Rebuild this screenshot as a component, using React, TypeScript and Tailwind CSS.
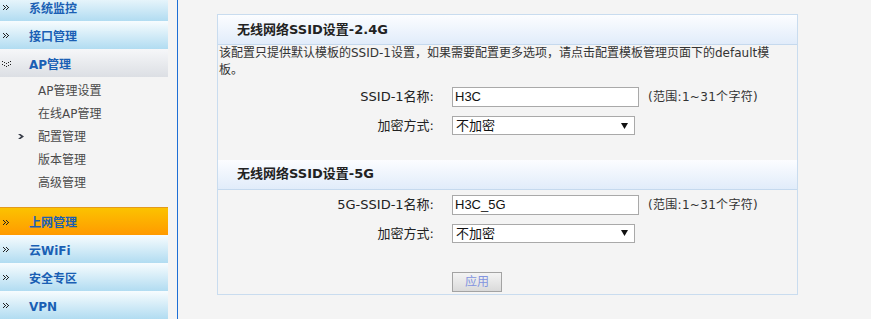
import React from 'react';

const FONT = { fontFamily: '"DejaVu Sans", "Noto Sans CJK SC", sans-serif' };

// dotted double-chevron used in front of every top-level menu item
const DotArrow: React.FC<{ down?: boolean }> = ({ down }) => {
  const right = [[1, 0], [4, 0], [2, 1], [5, 1], [3, 2], [6, 2], [2, 3], [5, 3], [1, 4], [4, 4]];
  const pts = down ? right.map(([x, y]) => [y * 2, x - 1]) : right;
  return (
    <svg width="10" height="7" viewBox="0 0 10 7" className="shrink-0">
      {pts.map(([x, y], i) => (
        <rect key={i} x={x} y={y} width="1" height="1" fill="#1f1f1f" />
      ))}
    </svg>
  );
};

const MenuItem: React.FC<{ label: string; tone: 'blue' | 'grey' | 'orange'; down?: boolean }> = ({ label, tone, down }) => {
  const bg =
    tone === 'orange'
      ? 'bg-gradient-to-b from-[#fbc200] to-[#ff9a00] border-t border-[#e39a1c]'
      : tone === 'grey'
        ? 'bg-gradient-to-b from-[#f6f7f9] to-[#dcdfe4]'
        : 'bg-gradient-to-b from-[#f7fcfe] to-[#b1dcf1]';
  return (
    <div className={`flex h-[28px] w-[168px] items-center gap-[17px] pl-[2px] pt-[3px] ${bg}`}>
      <DotArrow down={down} />
      <span className="text-[12px] font-bold text-[#1a5fb4]">{label}</span>
    </div>
  );
};

const SubItem: React.FC<{ label: string; active?: boolean }> = ({ label, active }) => (
  <div className="flex h-[23px] items-center">
    <div className="flex w-[38px] justify-end pr-[14px]">
      {active && (
        <svg width="6" height="5" viewBox="0 0 6 5">
          <path d="M0 0 H2.5 L6 2.5 L2.5 5 H0 L3 2.5 Z" fill="#3a3f4a" />
        </svg>
      )}
    </div>
    <span className="text-[12px] text-[#4a4a4a]">{label}</span>
  </div>
);

const Field: React.FC<{ label: string; value: string }> = ({ label, value }) => (
  <div className="flex items-center">
    <div className="w-[216px] text-right text-[13px] text-[#222]">{label}</div>
    <div
      className="ml-[18px] flex h-[20px] w-[187px] items-center border border-[#a9a9a9] bg-white px-[2px] text-[13px] text-[#111]"
      style={{ fontFamily: '"Liberation Sans", "Noto Sans CJK SC", sans-serif' }}
    >
      {value}
    </div>
    <span className="ml-[9px] text-[12px] tracking-[0.3px] text-[#333]">(范围:1~31个字符)</span>
  </div>
);

const Select: React.FC<{ label: string }> = ({ label }) => (
  <div className="flex items-center">
    <div className="w-[216px] text-right text-[13px] text-[#222]">{label}</div>
    <div
      className="ml-[18px] flex h-[19px] w-[183px] items-center justify-between border border-[#a9a9a9] bg-white pl-[3px] pr-[6px] text-[13px] text-[#111]"
      style={{ fontFamily: '"Liberation Sans", "Noto Sans CJK SC", sans-serif' }}
    >
      <span>不加密</span>
      <svg width="7" height="6" viewBox="0 0 7 6">
        <path d="M0 0 H7 L3.5 6 Z" fill="#111" />
      </svg>
    </div>
  </div>
);

const SectionHead: React.FC<{ title: string }> = ({ title }) => (
  <div className="flex h-[30px] items-center border-b border-[#c5d9ee] bg-gradient-to-b from-[#fcfdff] to-[#e1ecfa] pl-[19px] text-[13px] font-bold text-[#222]">
    {title}
  </div>
);

export default function App() {
  return (
    <div className="flex h-[319px] w-[871px] overflow-hidden bg-[#f4f4f4]" style={FONT}>
      {/* Sidebar */}
      <div className="w-[178px] shrink-0 border-r border-[#1d6fd6]">
        <div className="-mt-[7px]">
          <MenuItem label="系统监控" tone="blue" />
          <MenuItem label="接口管理" tone="blue" />
          <MenuItem label="AP管理" tone="grey" down />
          <div className="pb-[13px] pt-[2px]">
            <SubItem label="AP管理设置" />
            <SubItem label="在线AP管理" />
            <SubItem label="配置管理" active />
            <SubItem label="版本管理" />
            <SubItem label="高级管理" />
          </div>
          <MenuItem label="上网管理" tone="orange" />
          <MenuItem label="云WiFi" tone="blue" />
          <MenuItem label="安全专区" tone="blue" />
          <MenuItem label="VPN" tone="blue" />
        </div>
      </div>

      {/* Content */}
      <div className="pl-[39px] pt-[14px]">
        <div className="w-[581px] border border-[#c9dcef] pb-[1px]">
          <SectionHead title="无线网络SSID设置-2.4G" />
          <p className="pl-[1px] text-[12px] leading-[17px] text-[#333]">
            该配置只提供默认模板的SSID-1设置，如果需要配置更多选项，请点击配置模板管理页面下的default模
            <br />
            板。
          </p>
          <div className="mt-[8px] flex flex-col gap-[9px]">
            <Field label="SSID-1名称:" value="H3C" />
            <Select label="加密方式:" />
          </div>
          <div className="mt-[24px]">
            <SectionHead title="无线网络SSID设置-5G" />
          </div>
          <div className="mt-[5px] flex flex-col gap-[9px]">
            <Field label="5G-SSID-1名称:" value="H3C_5G" />
            <Select label="加密方式:" />
          </div>
          <div className="mt-[26px] pl-[234px]">
            <button className="h-[20px] w-[50px] border border-[#a3a3a3] bg-gradient-to-b from-[#f4f4f4] to-[#dadada] text-[12px] text-[#8394e0]">
              应用
            </button>
          </div>
        </div>
      </div>
    </div>
  );
}
